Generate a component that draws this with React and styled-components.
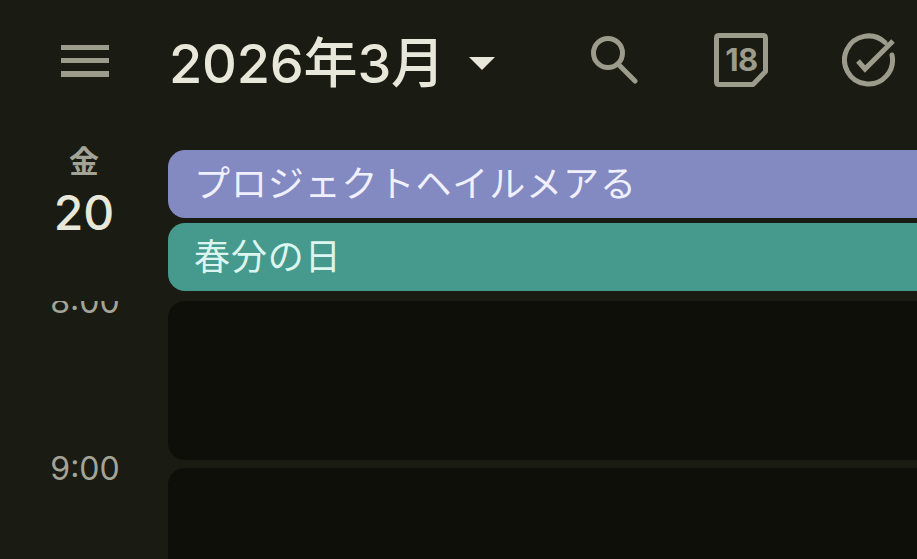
import React from "react";
import styled, { createGlobalStyle } from "styled-components";

const sans = `"Inter", "Noto Sans CJK JP", sans-serif`;

const GlobalStyle = createGlobalStyle`
  html, body {
    margin: 0;
    height: 100%;
    background: #1a1b12;
    overflow: hidden;
  }
`;

const Screen = styled.div`
  width: 917px;
  height: 559px;
  overflow: hidden;
  display: flex;
  flex-direction: column;
  background: #1a1b12;
  font-family: ${sans};
`;

const Toolbar = styled.header`
  height: 125px;
  flex-shrink: 0;
  display: flex;
  align-items: center;
  padding: 0 0 6px 60px;
  box-sizing: border-box;
`;

const IconSlot = styled.button`
  border: 0;
  padding: 0;
  background: none;
  display: flex;
  flex-shrink: 0;
  margin-left: ${(p) => p.$gap}px;
  margin-top: ${(p) => p.$drop || 0}px;
  color: #9b9c8c;
`;

const MonthButton = styled.div`
  display: flex;
  align-items: center;
  margin-left: 60px;
  margin-top: 8px;
  width: 421px;
  flex-shrink: 0;
  color: #e8e8da;
`;

const MonthLabel = styled.span`
  font-size: 54px;
  line-height: 64px;
  font-weight: 500;
  letter-spacing: -0.2px;
`;

const Caret = styled.span`
  width: 0;
  height: 0;
  margin-left: 24px;
  border-left: 13px solid transparent;
  border-right: 13px solid transparent;
  border-top: 13px solid #e8e8da;
`;

const DayRow = styled.section`
  display: flex;
  height: 176px;
  flex-shrink: 0;
`;

const DateCell = styled.div`
  width: 168px;
  flex-shrink: 0;
  display: flex;
  flex-direction: column;
  align-items: center;
  color: #e8e8da;
`;

const Weekday = styled.span`
  font-size: 30px;
  line-height: 36px;
  margin-top: 18px;
  font-weight: 700;
  color: #a3a497;
`;

const DayNumber = styled.span`
  font-size: 48px;
  line-height: 54px;
  margin-top: 7px;
  font-weight: 500;
`;

const Events = styled.div`
  flex: 1;
  display: flex;
  flex-direction: column;
  gap: 5px;
  padding-top: 25px;
`;

const EventChip = styled.div`
  height: 68px;
  display: flex;
  align-items: center;
  padding: 0 0 6px 26px;
  box-sizing: border-box;
  border-radius: 17px 0 0 17px;
  font-size: 36px;
  letter-spacing: 0.9px;
  background: ${(p) => p.$bg};
  color: ${(p) => p.$fg};
`;

const Hours = styled.div`
  flex: 1;
  overflow: hidden;
  display: flex;
  flex-direction: column;
  gap: 8px;
`;

const HourRow = styled.div`
  display: flex;
  height: 159px;
  flex-shrink: 0;
`;

const HourLabel = styled.div`
  width: 170px;
  margin-right: -2px;
  flex-shrink: 0;
  text-align: center;
  font-size: 32px;
  line-height: 36px;
  margin-top: -17px;
  height: 36px;
  color: #a3a497;
`;

const HourCard = styled.div`
  flex: 1;
  background: #0e0f08;
  border-radius: 17px 0 0 17px;
`;

const MenuIcon = () => (
  <svg width="48" height="32" viewBox="0 0 48 32" fill="currentColor">
    <rect y="0" width="48" height="5" />
    <rect y="13" width="48" height="5" />
    <rect y="26" width="48" height="6" />
  </svg>
);

const SearchIcon = () => (
  <svg width="48" height="48" viewBox="0 0 48 48" fill="none" stroke="currentColor" strokeWidth="5">
    <circle cx="18" cy="17" r="14.5" />
    <path d="M28 28 L45 45" strokeLinecap="round" />
  </svg>
);

const CalendarIcon = () => (
  <svg width="54" height="54" viewBox="0 0 54 54" fill="none" stroke="currentColor" strokeWidth="5">
    <path d="M5 2.5 H49 Q51.5 2.5 51.5 5 V38.5 L39 51.5 H5 Q2.5 51.5 2.5 49 V5 Q2.5 2.5 5 2.5 Z" strokeLinejoin="round" />
    <text x="27.5" y="38" textAnchor="middle" fontSize="31" fontWeight="700" letterSpacing="-0.5" fill="currentColor" stroke="none" fontFamily="Inter, sans-serif">18</text>
  </svg>
);

const TasksIcon = () => (
  <svg width="54" height="54" viewBox="0 0 54 54" fill="none" stroke="currentColor" strokeWidth="5">
    <path d="M43 9.5 A24 24 0 1 0 50 22" strokeLinecap="round" />
    <path d="M16 28 L23 36 L51 8" strokeLinecap="butt" />
  </svg>
);

const hours = ["8:00", "9:00"];

export default function App() {
  return (
    <Screen>
      <GlobalStyle />
      <Toolbar>
        <IconSlot $gap={1} $drop={3}><MenuIcon /></IconSlot>
        <MonthButton>
          <MonthLabel>2026年3月</MonthLabel>
          <Caret />
        </MonthButton>
        <IconSlot $gap={0}><SearchIcon /></IconSlot>
        <IconSlot $gap={76}><CalendarIcon /></IconSlot>
        <IconSlot $gap={74}><TasksIcon /></IconSlot>
      </Toolbar>
      <DayRow>
        <DateCell>
          <Weekday>金</Weekday>
          <DayNumber>20</DayNumber>
        </DateCell>
        <Events>
          <EventChip $bg="#8389c1" $fg="#eff0fb">プロジェクトヘイルメアる</EventChip>
          <EventChip $bg="#469a8d" $fg="#dcf6ef">春分の日</EventChip>
        </Events>
      </DayRow>
      <Hours>
        {hours.map((h) => (
          <HourRow key={h}>
            <HourLabel>{h}</HourLabel>
            <HourCard />
          </HourRow>
        ))}
      </Hours>
    </Screen>
  );
}
